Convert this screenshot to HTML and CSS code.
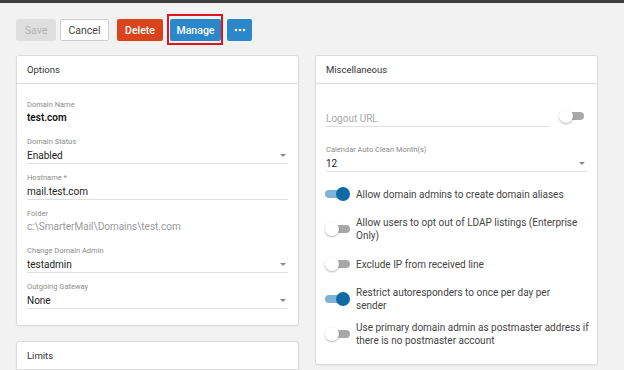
FILE: index.html
```html
<!DOCTYPE html>
<html lang="en">
<head>
    <meta charset="UTF-8">
    <meta name="viewport" content="width=device-width, initial-scale=1.0">
    <title>Domain Settings</title>
    <link rel="stylesheet" href="styles.css">
</head>
<body>
    <div class="topbar"></div>

    <div class="toolbar">
        <button class="btn save" disabled>Save</button>
        <button class="btn cancel">Cancel</button>
        <button class="btn delete">Delete</button>
        <span class="highlight">
            <button class="btn manage">Manage</button>
        </span>
        <button class="btn more">
            <svg width="12" height="4" viewBox="0 0 12 4">
                <circle cx="2" cy="2" r="1.3" fill="#fff"/>
                <circle cx="6" cy="2" r="1.3" fill="#fff"/>
                <circle cx="10" cy="2" r="1.3" fill="#fff"/>
            </svg>
        </button>
    </div>

    <div class="columns">
        <div class="column">
            <div class="panel">
                <div class="panel-head">Options</div>
                <div class="panel-body">
                    <div class="field static">
                        <label>Domain Name</label>
                        <div class="value strong">test.com</div>
                    </div>
                    <div class="field">
                        <label>Domain Status</label>
                        <div class="value">Enabled <span class="caret"></span></div>
                    </div>
                    <div class="field">
                        <label>Hostname *</label>
                        <div class="value">mail.test.com</div>
                    </div>
                    <div class="field static">
                        <label>Folder</label>
                        <div class="value muted">c:\SmarterMail\Domains\test.com</div>
                    </div>
                    <div class="field">
                        <label>Change Domain Admin</label>
                        <div class="value">testadmin <span class="caret"></span></div>
                    </div>
                    <div class="field">
                        <label>Outgoing Gateway</label>
                        <div class="value">None <span class="caret"></span></div>
                    </div>
                </div>
            </div>

            <div class="panel">
                <div class="panel-head">Limits</div>
                <div class="panel-body tall"></div>
            </div>
        </div>

        <div class="column">
            <div class="panel">
                <div class="panel-head">Miscellaneous</div>
                <div class="panel-body">
                    <div class="field-row">
                        <div class="field url">
                            <label></label>
                            <div class="value placeholder">Logout URL</div>
                        </div>
                        <span class="toggle"></span>
                    </div>
                    <div class="field">
                        <label>Calendar Auto Clean Month(s)</label>
                        <div class="value">12 <span class="caret"></span></div>
                    </div>

                    <div class="switch-row">
                        <span class="toggle on"></span>
                        <span class="switch-text">Allow domain admins to create domain aliases</span>
                    </div>
                    <div class="switch-row">
                        <span class="toggle"></span>
                        <span class="switch-text">Allow users to opt out of LDAP listings (Enterprise Only)</span>
                    </div>
                    <div class="switch-row">
                        <span class="toggle"></span>
                        <span class="switch-text">Exclude IP from received line</span>
                    </div>
                    <div class="switch-row">
                        <span class="toggle on"></span>
                        <span class="switch-text">Restrict autoresponders to once per day per<br>sender</span>
                    </div>
                    <div class="switch-row">
                        <span class="toggle"></span>
                        <span class="switch-text">Use primary domain admin as postmaster address if there is no postmaster account</span>
                    </div>
                </div>
            </div>
        </div>
    </div>
</body>
</html>
```

FILE: styles.css
```css
*, *::before, *::after {
    margin: 0;
    padding: 0;
    box-sizing: border-box;
}

body {
    font-family: Roboto, "Liberation Sans", sans-serif;
    background-color: #f2f2f2;
    color: #333;
    height: 100vh;
    overflow: hidden;
}

.topbar {
    height: 3px;
    background-color: #3d3d3d;
}

.toolbar {
    display: flex;
    align-items: flex-start;
    padding: 16px 16px 0;
    height: 38px;
}

.btn {
    font-family: inherit;
    font-size: 10.5px;
    height: 22px;
    padding: 0 6px;
    border: none;
    border-radius: 2px;
    cursor: pointer;
    display: flex;
    align-items: center;
    justify-content: center;
}

.save {
    width: 40px;
    background-color: #dedede;
    color: #b3b3b3;
}

.cancel {
    width: 49px;
    margin-left: 4px;
    background-color: #fff;
    color: #444;
    border: 1px solid #cfcfcf;
}

.delete {
    width: 46px;
    margin-left: 8px;
    background-color: #d9441c;
    color: #fff;
    font-weight: 500;
}

.highlight {
    position: relative;
    margin-left: 7px;

    &::after {
        content: '';
        position: absolute;
        inset: -5px -2px -4px -3px;
        border: 2px solid #e0141e;
        pointer-events: none;
    }
}

.manage {
    width: 51px;
    background-color: #2b87c9;
    color: #fff;
    font-weight: 500;
}

.more {
    width: 25px;
    margin-left: 6px;
    background-color: #2b87c9;
}

.columns {
    display: grid;
    grid-template-columns: 283px 283px;
    gap: 16px;
    padding: 14px 16px 0;
}

.column {
    display: flex;
    flex-direction: column;
    gap: 15px;
}

.panel {
    background-color: #fff;
    border: 1px solid #dcdcdc;
    border-radius: 3px;
    box-shadow: 0 1px 2px rgba(0, 0, 0, 0.05);
}

.panel-head {
    height: 28px;
    line-height: 27px;
    padding: 0 10px;
    font-size: 9.5px;
    color: #333;
    border-bottom: 1px solid #dcdcdc;
}

.panel-body {
    padding: 16px 10px 7px;

    &.tall {
        height: 60px;
    }
}

.field {
    margin-bottom: 9px;

    label {
        display: block;
        height: 10px;
        font-size: 7.5px;
        line-height: 10px;
        color: #8c8c8c;
    }

    .value {
        display: flex;
        align-items: center;
        justify-content: space-between;
        height: 17px;
        font-size: 10px;
        line-height: 15px;
        color: #222;
        border-bottom: 1px solid #dfdfdf;
    }

    .strong {
        font-weight: 600;
        color: #111;
    }

    .muted {
        color: #9a9a9a;
    }

    .placeholder {
        color: #a8a8a8;
    }

    &.static {
        margin-bottom: 12px;

        .value {
            height: 15px;
            border-bottom: none;
        }
    }

    &.url {
        label {
            height: 11px;
        }

        .value {
            height: 16px;
        }
    }
}

.caret {
    width: 0;
    height: 0;
    margin-right: 2px;
    border-left: 3px solid transparent;
    border-right: 3px solid transparent;
    border-top: 3px solid #888;
}

.field-row {
    display: flex;
    align-items: flex-end;
    margin-bottom: 18px;

    .field {
        flex: 1;
        margin-bottom: 0;
    }

    .toggle {
        margin: 0 3px 4px 9px;
    }
}

.switch-row {
    display: flex;
    align-items: center;
    min-height: 26px;
    margin-bottom: 9px;
    margin-right: -6px;

    > .toggle {
        margin-left: -1px;
    }

    &:last-child {
        margin-bottom: 10px;
    }
}

.switch-text {
    margin-left: 6px;
    font-size: 10px;
    line-height: 13px;
    color: #444;
}

.toggle {
    position: relative;
    flex-shrink: 0;
    width: 25px;
    height: 14px;

    &::before {
        content: '';
        position: absolute;
        left: 3px;
        right: 0;
        top: 3px;
        height: 8px;
        border-radius: 4px;
        background-color: #a8a8a8;
    }

    &::after {
        content: '';
        position: absolute;
        left: 0;
        top: 0;
        width: 14px;
        height: 14px;
        border-radius: 50%;
        background-color: #fff;
        box-shadow: 0 1px 2px rgba(0, 0, 0, 0.3);
    }

    &.on::before {
        left: 0;
        right: 3px;
        background-color: #7fb2d8;
    }

    &.on::after {
        left: auto;
        right: 0;
        background-color: #0f6aa6;
        box-shadow: none;
    }
}
```
